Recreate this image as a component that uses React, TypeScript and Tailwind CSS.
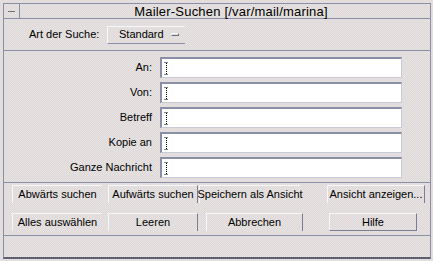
import React from 'react';

const line = 'border-[#8a8ea6]';

function Cursor() {
    return (
        <svg width="5" height="13" viewBox="0 0 5 13" className="ml-[2px] shrink-0">
            <path d="M0.5 0.5h4M0.5 12.5h4" stroke="#000" strokeWidth="1" strokeDasharray="1 1" />
            <path d="M2.5 1v11" stroke="#000" strokeWidth="1" strokeDasharray="1 1" />
        </svg>
    );
}

function Field({ label }: { label: string }) {
    return (
        <div className="flex items-center h-[21px]">
            <span className="w-[149px] text-right pr-[1px]">{label}</span>
            <div className="ml-[7px] w-[242px] h-[21px] flex items-center bg-white border-t-2 border-l-2 border-[#8a8ea6] border-b border-r border-b-[#c9cad6] border-r-[#c9cad6]">
                <Cursor />
            </div>
        </div>
    );
}

function Btn({ label, className = '' }: { label: string; className?: string }) {
    return (
        <div className={`h-[18px] flex items-center justify-center whitespace-nowrap border-t border-l border-[#f6f6fb] ${className}`}>
            {label}
        </div>
    );
}

export default function App() {
    return (
        <div className="w-[433px] h-[261px] overflow-hidden bg-[#e2dfe0] bg-[image:repeating-conic-gradient(#d6d9f1_0%_25%,#eee3c8_0%_50%)] bg-[length:2px_2px] font-['Liberation_Sans',Arial,sans-serif] text-[11px] text-black leading-none pt-[3px]">
            <div className={`ml-[3px] w-[428px] h-[256px] border-l border-r ${line} border-b-2 border-b-[#5e6070]`}>
                {/* title bar */}
                <div className={`flex h-[16px] border-y ${line}`}>
                    <div className={`w-[16px] border-r ${line} flex items-center justify-center`}>
                        <div className="w-[7px] h-px bg-[#6a6e80]" />
                    </div>
                    <div className="flex-1 flex items-center justify-center pl-[12px] text-[13px] tracking-[0.2px]">
                        Mailer-Suchen [/var/mail/marina]
                    </div>
                </div>

                {/* search type */}
                <div className={`flex items-center h-[32px] border-b ${line}`}>
                    <span className="pl-[25px] w-[103px]">Art der Suche:</span>
                    <div className="w-[78px] h-[18px] flex items-center border-t border-l border-[#f6f6fb] border-b border-b-[#8a8ea6] pl-[11px]">
                        <span>Standard</span>
                        <div className="ml-[7px] w-[8px] h-[3px] border-t border-l border-[#f6f6fb] border-b border-r border-b-[#6a6e80] border-r-[#6a6e80]" />
                    </div>
                </div>

                {/* fields */}
                <div className={`flex flex-col gap-[4px] pt-[6px] pb-[4px] border-b ${line}`}>
                    <Field label="An:" />
                    <Field label="Von:" />
                    <Field label="Betreff" />
                    <Field label="Kopie an" />
                    <Field label="Ganze Nachricht" />
                </div>

                {/* buttons */}
                <div className={`flex flex-col gap-[10px] pt-[2px] pb-[4px] border-b ${line}`}>
                    <div className="flex">
                        <Btn label="Abwärts suchen" className="ml-[8px] w-[90px]" />
                        <Btn label="Aufwärts suchen" className="ml-[6px] w-[90px] border-r border-r-[#7a7e92]" />
                        <Btn label="Speichern als Ansicht" className="ml-[1px] w-[101px]" />
                        <Btn label="Ansicht anzeigen..." className="ml-[27px] w-[98px] border-r border-r-[#7a7e92]" />
                    </div>
                    <div className="flex">
                        <Btn label="Alles auswählen" className="ml-[8px] w-[90px]" />
                        <Btn label="Leeren" className="ml-[6px] w-[90px] border-r border-r-[#7a7e92]" />
                        <Btn label="Abbrechen" className="ml-[8px] w-[97px] border-r border-r-[#7a7e92]" />
                        <Btn label="Hilfe" className="ml-[26px] w-[88px] border-r border-b border-r-[#7a7e92] border-b-[#7a7e92]" />
                    </div>
                </div>
            </div>
        </div>
    );
}
